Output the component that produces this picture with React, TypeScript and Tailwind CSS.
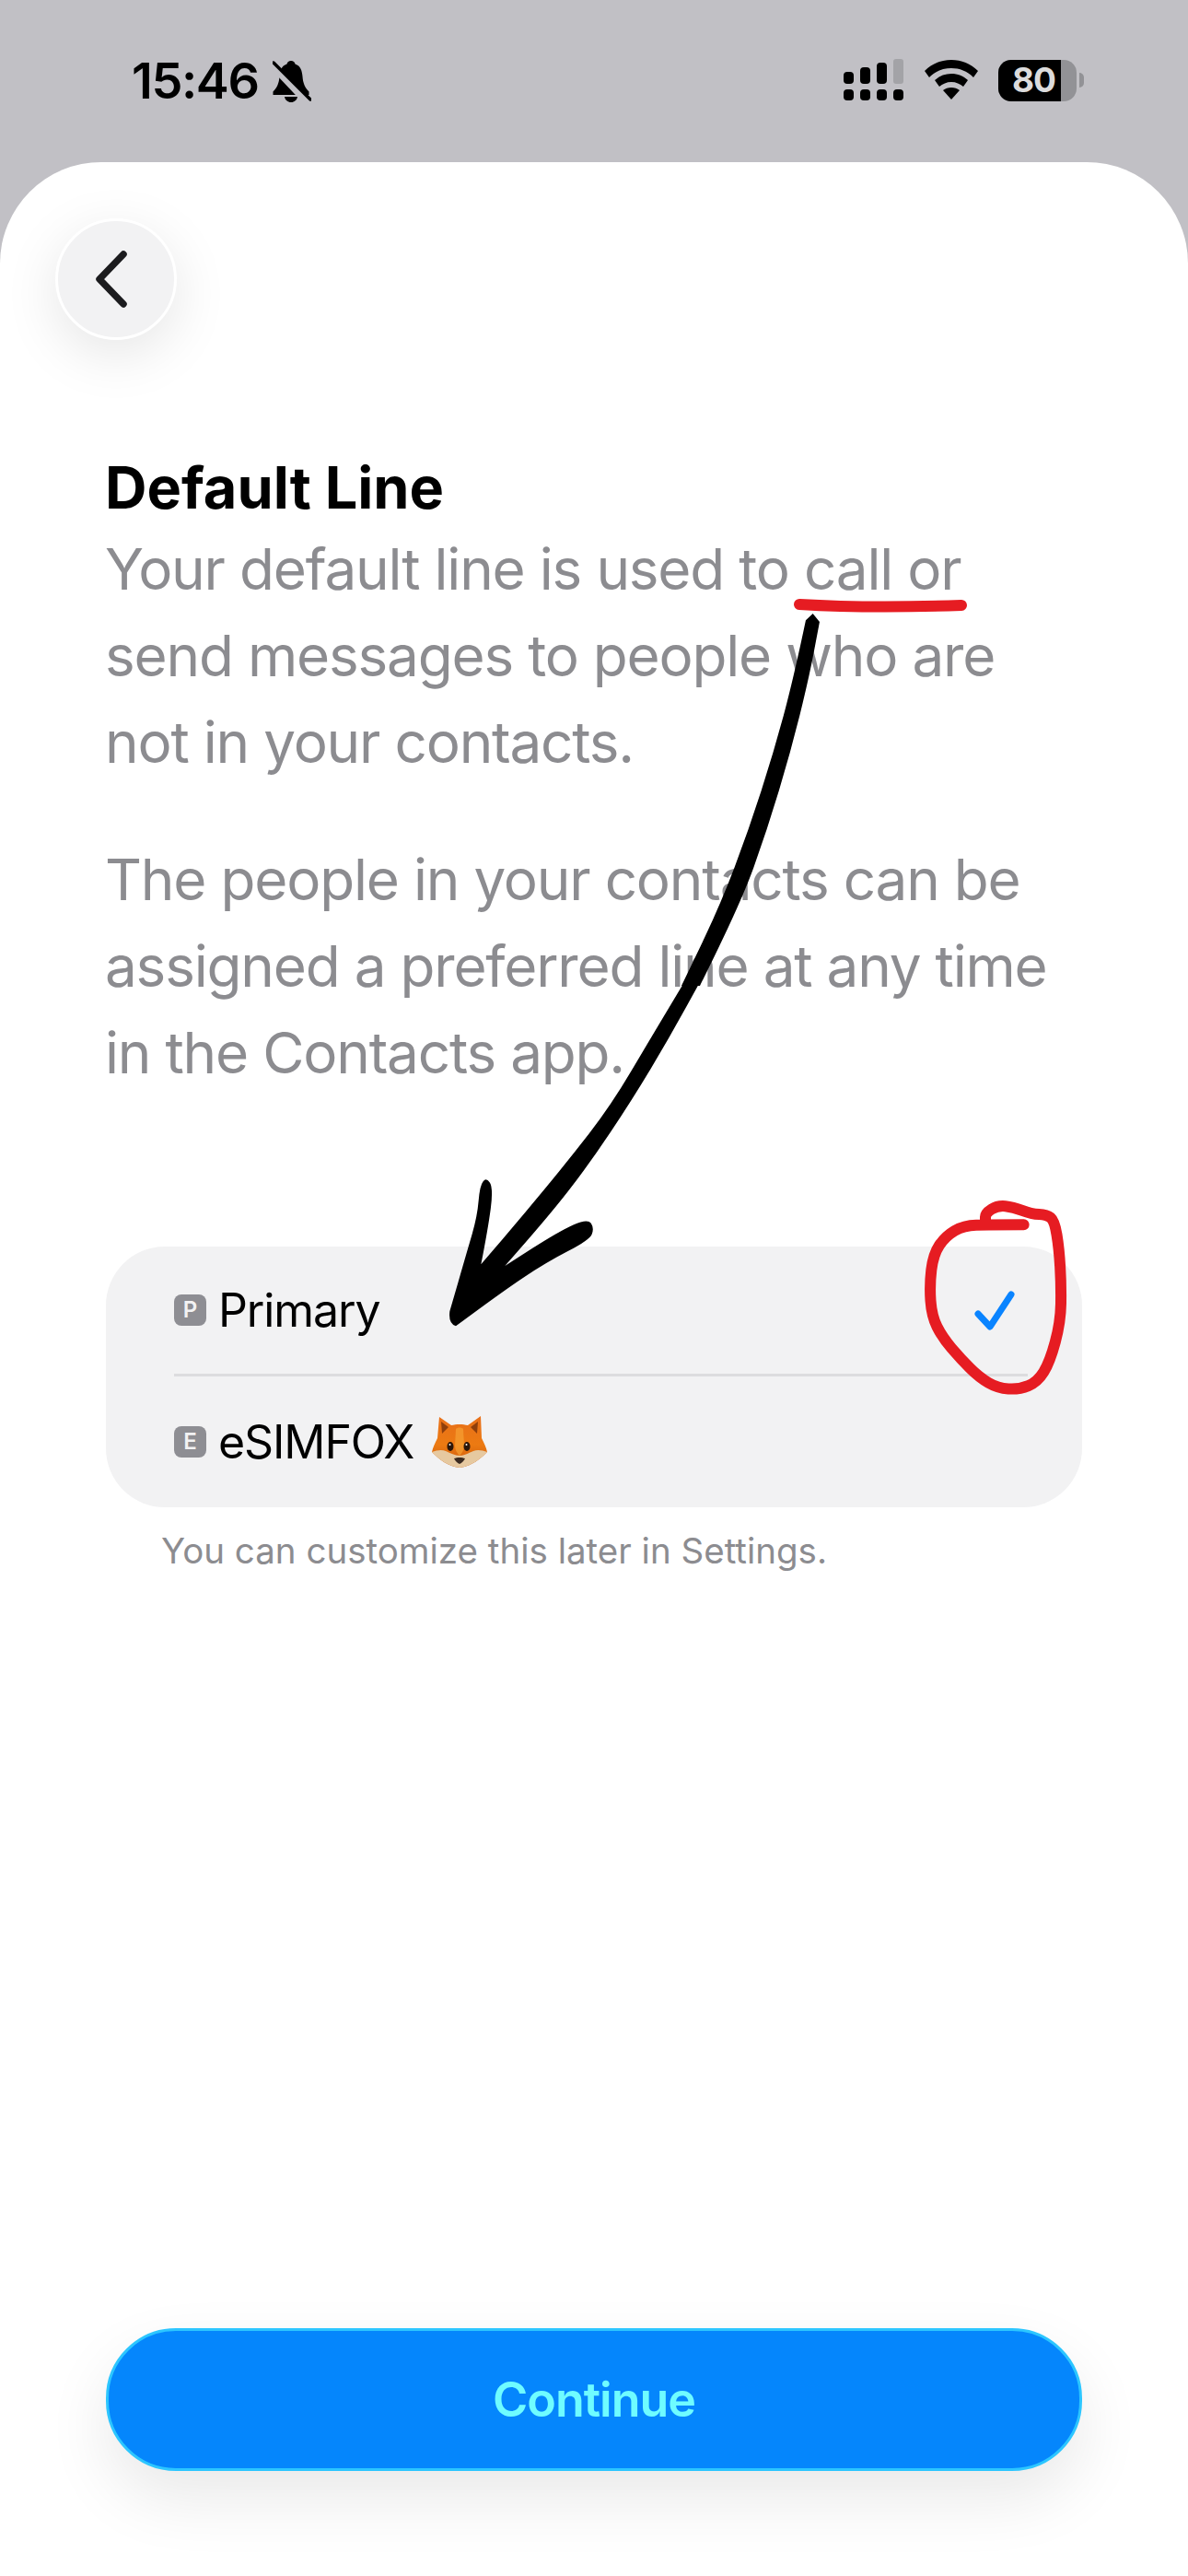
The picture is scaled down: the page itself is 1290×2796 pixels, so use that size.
type Pt = [number, number];

// runs a smooth curve through the points, used for the hand drawn strokes
function curve(points: Pt[]) {
  let d = `L${points[0][0]} ${points[0][1]}`;
  for (let i = 1; i < points.length - 1; i++) {
    const [x, y] = points[i];
    const [nx, ny] = points[i + 1];
    d += `Q${x} ${y} ${(x + nx) / 2} ${(y + ny) / 2}`;
  }
  const last = points[points.length - 1];
  return `${d}L${last[0]} ${last[1]}`;
}

function BellSlash() {
  return (
    <svg width="42" height="45" viewBox="0 0 42 45" className="ml-[15px]">
      <path d="M20 0c2.500 0 4 1.500 4.500 3.500C30.500 5.500 32 11 32.500 17c.5 7 2.500 12 7 16.500V37H.5v-3.500C5 29 7 24 7.500 17 8 11 9.500 5.500 15.500 3.500 16 1.500 17.500 0 20 0z" fill="#000" />
      <path d="M13 39h14c-.5 3.500-3.500 6-7 6s-6.500-2.500-7-6z" fill="#000" />
      <path d="M-1 4l38 40" stroke="#c1c0c5" strokeWidth="8" />
      <path d="M1 2l40 40" stroke="#000" strokeWidth="3.500" strokeLinecap="round" />
    </svg>
  );
}

function Signal() {
  return (
    <svg width="66" height="46" viewBox="0 0 66 46">
      <rect x="0" y="14" width="11" height="13" rx="4" fill="#000" />
      <rect x="18" y="9" width="11" height="18" rx="4" fill="#000" />
      <rect x="36" y="4" width="11" height="23" rx="4" fill="#000" />
      <rect x="54" y="0" width="11" height="27" rx="3" fill="#a3a3a7" />
      <rect x="0" y="33" width="11" height="12" rx="4" fill="#000" />
      <rect x="18" y="33" width="11" height="12" rx="4" fill="#000" />
      <rect x="36" y="33" width="11" height="12" rx="4" fill="#000" />
      <rect x="54" y="33" width="11" height="12" rx="4" fill="#000" />
    </svg>
  );
}

function Wifi() {
  return (
    <svg width="58" height="44" viewBox="0 0 58 44">
      <path d="M29 0c11 0 21 4 29 12l-5 7C46 12 38 9 29 9S12 12 5 19l-5-7C8 4 18 0 29 0z" fill="#000" />
      <path d="M29 15c7 0 13 2.500 18 7l-5 7c-3.500-3-8-5-13-5s-9.500 2-13 5l-5-7c5-4.500 11-7 18-7z" fill="#000" />
      <path d="M29 30c3.500 0 6.500 1 9 3L29 43l-9-10c2.500-2 5.500-3 9-3z" fill="#000" />
    </svg>
  );
}

function Battery() {
  return (
    <div className="flex items-center">
      <div className="relative flex h-[45px] w-[85px] overflow-hidden rounded-[14px] bg-[#929296]">
        <div className="flex h-full w-[68px] items-center justify-center bg-black pl-[9px]">
          <span className="text-[37px] font-bold tracking-[-1px] text-[#dcdcdc]">80</span>
        </div>
      </div>
      <div className="ml-[3px] h-[16px] w-[5px] rounded-r-full bg-[#929296]" />
    </div>
  );
}

function Fox() {
  return (
    <svg width="60" height="56" viewBox="0 0 60 56">
      <defs>
        <linearGradient id="fur" x1="0" y1="0" x2="0" y2="1">
          <stop offset="0" stopColor="#e8701a" />
          <stop offset="0.55" stopColor="#ec7a12" />
          <stop offset="1" stopColor="#c9560c" />
        </linearGradient>
      </defs>
      <path d="M8 1l13 9c5-1.500 13-1.500 18 0L53 0l1 24c3 6 5 10 6 15-8 8-18 16-30 17C18 55 8 47 0 39c1-5 3-9 6-15z" fill="url(#fur)" />
      <path d="M10 6l8 6-7 7zM50 6l-8 6 7 7z" fill="#8f3f0c" />
      <path d="M0 39c5-2 11-3 15-1 5 2 10 5 15 5s10-3 15-5c4-2 10-1 15 1-8 8-18 16-30 17C18 55 8 47 0 39z" fill="#e6c9a0" />
      <path d="M26 14c2-2 6-2 8 0l1 18c0 5-3 9-5 11-2-2-5-6-5-11z" fill="#f8a838" opacity="0.6" />
      <ellipse cx="20" cy="33" rx="3.500" ry="5" fill="#2b1608" />
      <ellipse cx="38" cy="33" rx="3.500" ry="5" fill="#2b1608" />
      <circle cx="19.500" cy="31" r="1" fill="#fff" />
      <circle cx="37.500" cy="31" r="1" fill="#fff" />
      <path d="M24 46c3-1.500 9-1.500 12 0-1 2.500-3.500 5-6 6-2.500-1-5-3.500-6-6z" fill="#3a2a20" />
    </svg>
  );
}

function SimRow({ badge, children }: { badge: string; children: React.ReactNode }) {
  return (
    <div className="flex items-center">
      <div className="flex h-[34px] w-[35px] items-center justify-center rounded-[8px] bg-[#8e8e93] text-[24px] font-semibold text-[#f2f2f3]">
        {badge}
      </div>
      <div className="ml-[13px] flex items-center text-[50px] leading-[60px] tracking-[-1.1px] text-black">{children}</div>
    </div>
  );
}

const shaftTop = curve([[1245, 70], [1205, 260], [1140, 500], [1060, 750], [965, 1000], [840, 1260]]);
const shaftTopBack = curve([[900, 1260], [1030, 1000], [1120, 750], [1195, 500], [1255, 260], [1290, 75]]);
const head = curve([[860, 0], [740, 200], [610, 420], [470, 600], [330, 770], [187, 937]]);
const headBarb = curve([[187, 937], [210, 820], [227, 690], [205, 653], [183, 680], [175, 780], [140, 900], [85, 1090]]);
const headBottom = curve([[105, 1138], [250, 1030], [400, 930], [540, 858], [556, 820], [535, 787], [440, 830], [265, 942]]);
const headBack = curve([[265, 942], [400, 790], [540, 610], [680, 400], [800, 200], [910, 0]]);
const ring = curve([
  [365, 103], [250, 103], [170, 105], [110, 140], [70, 200], [58, 300], [65, 400], [100, 470], [160, 540], [220, 600],
  [280, 635], [350, 640], [410, 615], [450, 550], [485, 420], [487, 300], [480, 180], [465, 90], [440, 70], [390, 68],
  [330, 45], [280, 40], [240, 65], [240, 90],
]);

// hand drawn markup sitting over the screenshot
function Scribbles() {
  return (
    <svg className="pointer-events-none absolute inset-0" width="1290" height="2796" viewBox="0 0 1290 2796" fill="none">
      <path d="M868 656c50 3 120 3 176 1" stroke="#e61c22" strokeWidth="12" strokeLinecap="round" />
      <g transform="translate(460 650) scale(0.3333)" fill="#000">
        <path d={`M1268 48${shaftTop}${shaftTopBack}z`} />
      </g>
      <g transform="translate(460 1060) scale(0.3333)" fill="#000">
        <path d={`M860 0${head}${headBarb}Q80 1130 105 1138${headBottom}${headBack}z`} />
      </g>
      <g transform="translate(990 1295) scale(0.3333)">
        <path d={`M365 103${ring}`} stroke="#e61c22" strokeWidth="36" strokeLinecap="round" strokeLinejoin="round" />
      </g>
    </svg>
  );
}

export default function App() {
  return (
    <div className="relative flex h-[2796px] w-[1290px] flex-col overflow-hidden bg-[#c1c0c5] font-['Inter',sans-serif]">
      <div className="flex h-[176px] items-start justify-between pl-[143px] pr-[113px] pt-[61px]">
        <div className="flex items-center">
          <span className="text-[54px] font-semibold leading-[54px] tracking-[-1.4px] text-black">15:46</span>
          <BellSlash />
        </div>
        <div className="flex items-center gap-[22px] pt-[3px]">
          <Signal />
          <Wifi />
          <Battery />
        </div>
      </div>

      <div className="flex flex-1 flex-col rounded-t-[110px] bg-white">
        <div className="pl-[60px] pt-[61px]">
          <button className="flex h-[132px] w-[132px] items-center justify-center rounded-full border-[3px] border-white bg-[#f2f2f3] shadow-[0_16px_60px_rgba(0,0,0,0.1)]">
            <svg width="40" height="64" viewBox="0 0 40 64" fill="none" className="mr-[10px]">
              <path d="M33 5L7 32l26 27" stroke="#1c1c1e" strokeWidth="7.500" strokeLinecap="round" strokeLinejoin="round" />
            </svg>
          </button>
        </div>

        <div className="pl-[114px] pt-[124px]">
          <h1 className="text-[63px] font-bold leading-[72px] text-black">Default Line</h1>
          <p className="mt-[6px] text-[62px] leading-[94px] tracking-[-1.2px] text-[#8c8c90]">
            Your default line is used to call or
            <br />
            send messages to people who are
            <br />
            not in your contacts.
          </p>
          <p className="mt-[55px] text-[62px] leading-[94px] tracking-[-1.2px] text-[#8c8c90]">
            The people in your contacts can be
            <br />
            assigned a preferred line at any time
            <br />
            in the Contacts app.
          </p>
        </div>

        <div className="ml-[115px] mt-[163px] w-[1060px] rounded-[64px] bg-[#f2f2f3] pl-[74px] pr-[59px]">
          <div className="flex h-[141px] items-center justify-between border-b-[3px] border-[#dcdcde]">
            <SimRow badge="P">Primary</SimRow>
            <svg width="44" height="43" viewBox="0 0 44 43" fill="none" className="mr-[14px]">
              <path d="M4 25l13 14L40 4" stroke="#0a84ff" strokeWidth="7" strokeLinecap="round" strokeLinejoin="round" />
            </svg>
          </div>
          <div className="flex h-[142px] items-center">
            <SimRow badge="E">
              eSIMFOX
              <span className="ml-[20px]"><Fox /></span>
            </SimRow>
          </div>
        </div>

        <p className="ml-[175px] mt-[24px] text-[38.500px] leading-[46px] text-[#8c8c90]">You can customize this later in Settings.</p>

        <button className="mb-[114px] ml-[115px] mt-auto flex h-[155px] w-[1060px] items-center justify-center rounded-[76px] border-[3px] border-[#2cc6ff] bg-[#0586fc] text-[52px] font-semibold tracking-[-1px] text-[#6ffcff] shadow-[0_30px_70px_rgba(0,0,0,0.09)]">
          Continue
        </button>
      </div>

      <Scribbles />
    </div>
  );
}
